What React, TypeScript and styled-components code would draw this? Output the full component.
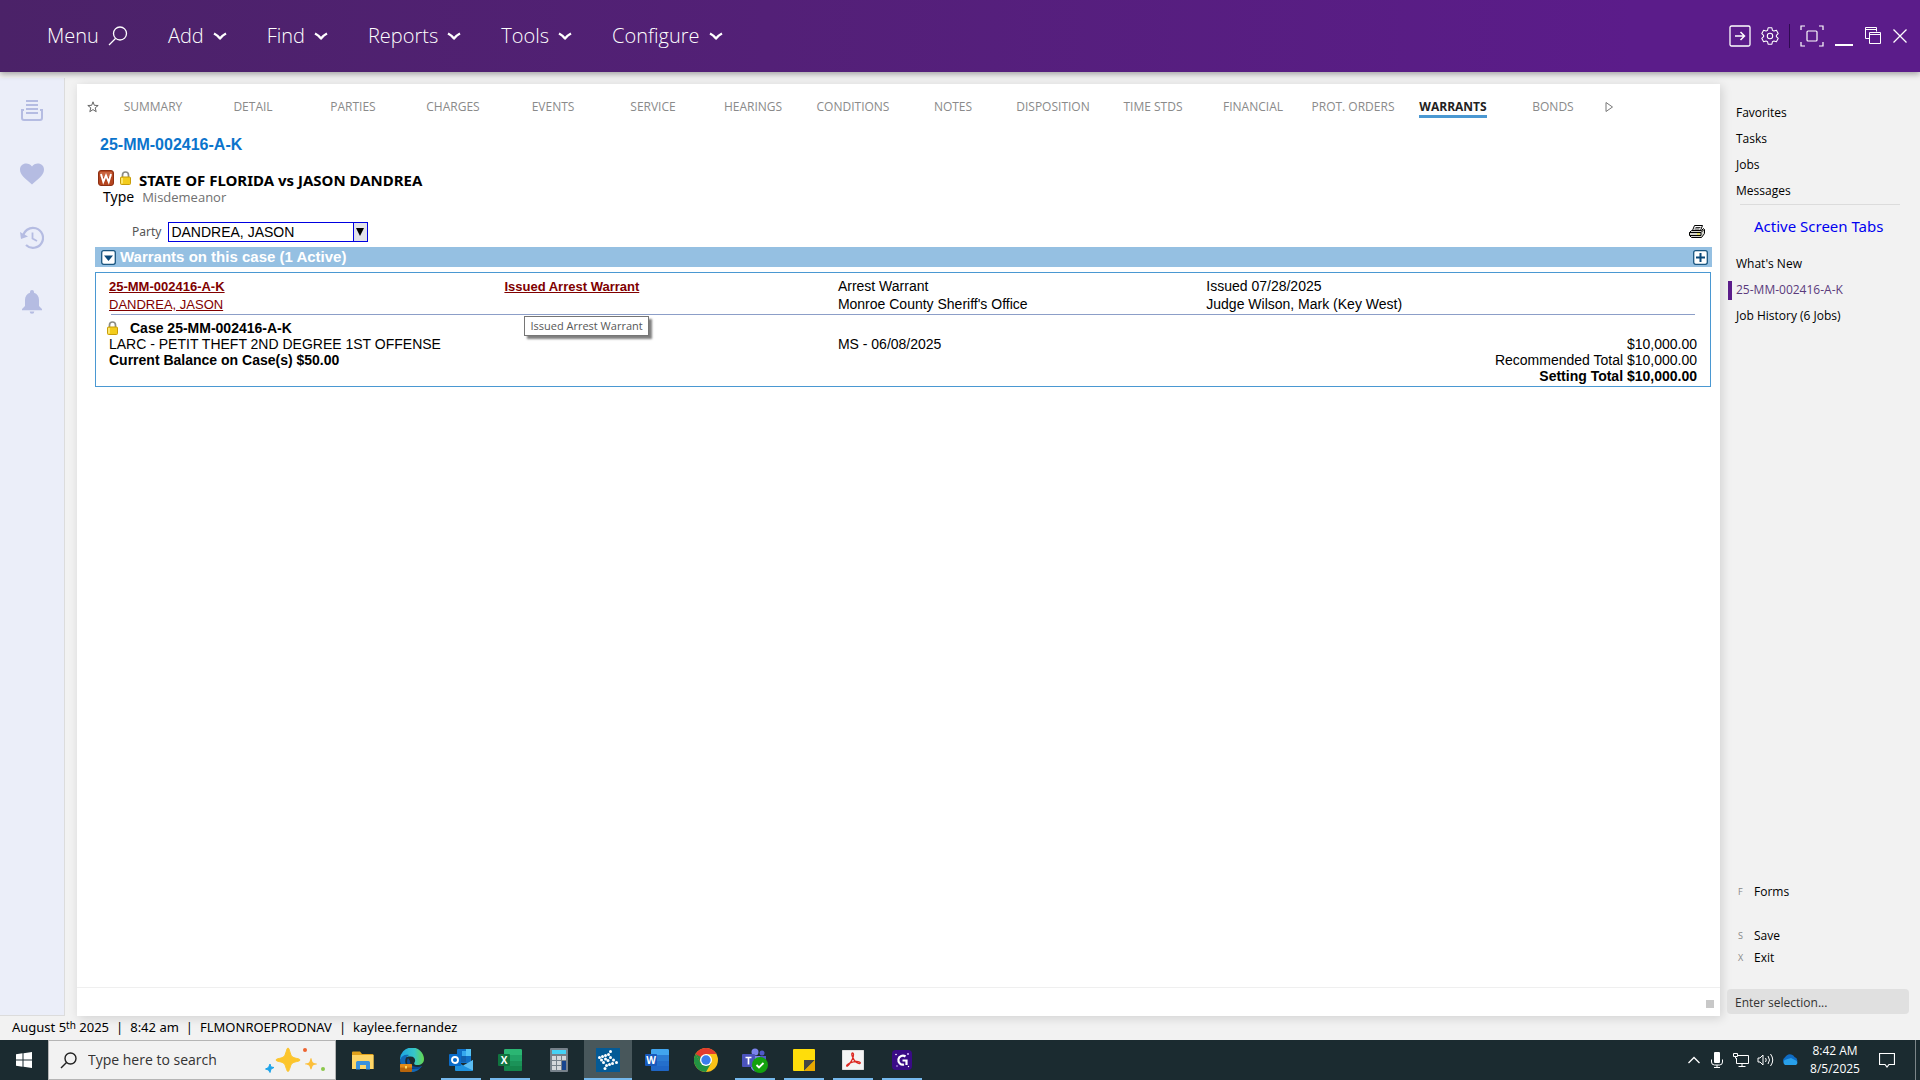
import React from "react";
import styled, { createGlobalStyle, css } from "styled-components";

const ui = `"Open Sans", "Noto Sans", sans-serif`;
const sys = `"Noto Sans", "Open Sans", sans-serif`;
const arial = `"Liberation Sans", Arial, sans-serif`;

const GlobalStyle = createGlobalStyle`
  *, *::before, *::after { box-sizing: border-box; }
  body { margin: 0; background: #f2f2f2; color: #000; font: 13px/18px ${ui}; }
  button { font: inherit; color: inherit; background: none; border: 0; padding: 0; cursor: pointer; }
  a { color: inherit; text-decoration: none; }
  svg { display: block; flex: none; }
`;

const Page = styled.div`
  display: flex;
  flex-direction: column;
  min-height: 100vh;
`;

/* ---------- header ---------- */
const Header = styled.header`
  display: flex;
  justify-content: space-between;
  height: 72px;
  padding: 0 12px 0 47px;
  color: #fff;
  background: linear-gradient(90deg, #4b2268 0%, #532077 40%, #5b1c8a 85%);
  box-shadow: 0 2px 6px rgba(0, 0, 0, 0.35);
  z-index: 1;
`;
const MenuBar = styled.nav`
  display: flex;
  align-items: center;
  gap: 40px;
`;
const MenuButton = styled.button`
  display: flex;
  align-items: center;
  gap: 9px;
  font-size: 20px;
  font-weight: 300;
  line-height: 28px;
`;
const WindowTools = styled.div`
  display: flex;
  align-items: center;
  gap: 10px;
`;
const ToolDivider = styled.span`
  width: 1px;
  height: 24px;
  background: #2f0a52;
`;

/* ---------- body ---------- */
const Body = styled.div`
  flex: 1;
  display: flex;
`;
const Rail = styled.nav`
  display: flex;
  flex-direction: column;
  align-items: center;
  gap: 40px;
  width: 65px;
  margin-top: 6px;
  padding-top: 20px;
  color: #b5bce2;
  background: #ebeef9;
  border-right: 1px solid #dcdcdc;
  border-bottom: 1px solid #dcdcdc;
`;
const Card = styled.main`
  flex: 1;
  display: flex;
  flex-direction: column;
  min-width: 0;
  margin: 12px 0 0 12px;
  background: #fff;
  box-shadow: 2px 2px 10px rgba(0, 0, 0, 0.14);
`;
const Tabs = styled.nav`
  display: flex;
  align-items: center;
  height: 46px;
  padding-left: 6px;
  color: #8a8a8a;
`;
const TabStar = styled.button`
  display: flex;
  justify-content: center;
  width: 20px;
`;
const TabSlot = styled.div`
  display: flex;
  justify-content: center;
  width: 100px;
  font-size: 12px;
  line-height: 16px;
`;
const Tab = styled.a<{ $active?: boolean }>`
  padding-top: 3px;
  border-bottom: 3px solid transparent;
  white-space: nowrap;
  ${(p) =>
    p.$active &&
    css`
      color: #222;
      font-weight: 700;
      border-color: #4a98d2;
    `}
`;
const CaseInfo = styled.section`
  display: flex;
  flex-direction: column;
  padding-left: 21px;
`;
const CaseNumber = styled.h1`
  margin: 0 0 8px 2px;
  font: 700 16px/30px ${arial};
  color: #0b74cc;
`;
const CaseTitle = styled.div`
  display: flex;
  align-items: center;
  gap: 6px;
  height: 20px;
  h2 {
    margin: 3px 0 0 2px;
    font: 700 15px/18px ${sys};
  }
`;
const CaseType = styled.div`
  display: flex;
  align-items: center;
  gap: 8px;
  padding-left: 5px;
  font: 14px/18px ${sys};
  span:last-child { color: #707070; font: 13px/18px ${ui}; }
`;
const PartyRow = styled.form`
  display: flex;
  align-items: center;
  justify-content: space-between;
  padding: 16px 15px 5px 55px;
`;
const PartyField = styled.div`
  display: flex;
  align-items: center;
  gap: 7px;
  label { color: #555; font: 12px/20px ${sys}; }
`;
const SelectBox = styled.div`
  display: flex;
  align-items: stretch;
  width: 200px;
  height: 20px;
  border: 1px solid #0000e0;
  background: linear-gradient(90deg, #fff 184px, #0000e0 184px, #0000e0 185px, #e2e2ea 185px);
  position: relative;
  select {
    flex: 1;
    appearance: none;
    border: 0;
    padding: 0 16px 0 2px;
    background: transparent;
    color: #000;
    font: 14px/18px ${arial};
    outline: 0;
  }
  svg {
    position: absolute;
    right: 3px;
    top: 5px;
    pointer-events: none;
  }
`;
const SectionBar = styled.div`
  display: flex;
  align-items: center;
  gap: 4px;
  height: 20px;
  margin: 0 8px 5px 18px;
  padding: 0 4px 0 6px;
  background: #95c0e2;
  color: #fff;
  h3 {
    flex: 1;
    margin: 0;
    font: 700 15px/20px ${arial};
  }
`;
const WarrantBox = styled.section`
  margin: 0 9px 0 18px;
  padding: 4px 13px 2px 13px;
  border: 1px solid #4a98d2;
`;
const WarrantTable = styled.table`
  width: 100%;
  table-layout: fixed;
  border-collapse: collapse;
  font: 14px/16px ${arial};
  td { padding: 0; }
`;
const Party = styled.tr`
  line-height: 18px;
`;
const Cell = styled.td<{ $end?: boolean; $bold?: boolean }>`
  position: relative;
  white-space: nowrap;
  text-align: ${(p) => (p.$end ? "right" : "left")};
  font-weight: ${(p) => (p.$bold ? 700 : 400)};
`;
const RecordLink = styled.a<{ $bold?: boolean }>`
  color: #800000;
  font-size: 13px;
  line-height: 14px;
  font-weight: ${(p) => (p.$bold ? 700 : 400)};
  text-decoration: underline;
`;
const Rule = styled.hr`
  height: 1px;
  margin: 1px 2px 4px;
  border: 0;
  background: #8c9ec8;
`;
const CaseLine = styled.div`
  display: flex;
  align-items: center;
  gap: 12px;
  height: 17px;
  margin-left: -2px;
  font-weight: 700;
`;
const Tip = styled.span`
  position: absolute;
  left: 20px;
  top: 39px;
  z-index: 2;
  padding: 0 5px;
  border: 1px solid #767676;
  background: #fff;
  box-shadow: 3px 3px 2px rgba(0, 0, 0, 0.5);
  color: #575757;
  font: 11px/18px ${ui};
`;
const CardFooter = styled.footer`
  display: flex;
  justify-content: flex-end;
  align-items: flex-start;
  height: 29px;
  margin-top: auto;
  padding: 12px 6px 0;
  border-top: 1px solid #efefef;
`;
const Grip = styled.span`
  width: 8px;
  height: 8px;
  background: #c8c8c8;
`;

/* ---------- right side ---------- */
const Side = styled.aside`
  display: flex;
  flex-direction: column;
  width: 200px;
  padding: 28px 11px 2px 7px;
  font-size: 12px;
`;
const SideLink = styled.a<{ $current?: boolean }>`
  display: flex;
  align-items: center;
  height: 26px;
  padding-left: 9px;
  line-height: 20px;
  ${(p) =>
    p.$current &&
    css`
      color: #5a3a7c;
      &::before {
        content: "";
        width: 4px;
        height: 19px;
        margin: 0 4px 0 -8px;
        background: #5b1c8a;
      }
    `}
`;
const SideRule = styled.hr`
  width: 160px;
  height: 1px;
  margin: 0 0 7px 13px;
  border: 0;
  background: #dcdcdc;
`;
const SideHeading = styled.h2`
  margin: 0 0 11px 27px;
  font: 400 15px/28px ${sys};
  color: #0000f0;
  white-space: nowrap;
`;
const Actions = styled.div`
  display: flex;
  flex-direction: column;
  margin-top: auto;
  padding-left: 11px;
`;
const ActionButton = styled.button<{ $spaced?: boolean }>`
  display: flex;
  align-items: center;
  height: 22px;
  margin-bottom: ${(p) => (p.$spaced ? 22 : 0)}px;
  font-size: 12px;
  span {
    width: 16px;
    text-align: left;
    font-size: 9px;
    color: #888;
  }
`;
const Selection = styled.input`
  height: 25px;
  margin-top: 20px;
  padding: 1px 8px 0;
  border: 0;
  border-radius: 4px;
  background: #e0e0e0;
  font: 12px/24px ${ui};
  &::placeholder { color: #333; opacity: 1; }
`;
const StatusBar = styled.div`
  display: flex;
  align-items: center;
  gap: 7px;
  height: 24px;
  padding: 0 12px 2px;
  font: 13px/20px ${sys};
  sup { font-size: 10px; line-height: 0; vertical-align: 3px; }
`;

/* ---------- taskbar ---------- */
const Taskbar = styled.footer`
  display: flex;
  height: 40px;
  background: #1b2b30;
  color: #fff;
`;
const StartButton = styled.button`
  display: grid;
  place-items: center;
  width: 48px;
`;
const SearchBox = styled.label`
  display: flex;
  align-items: center;
  width: 288px;
  padding: 0 9px 0 11px;
  border: 1px solid #b5b5b5;
  background: #f2f2f2;
  color: #222;
  input {
    flex: 1;
    min-width: 0;
    padding: 0 0 0 11px;
    border: 0;
    background: transparent;
    font: 14px/24px ${ui};
    &::placeholder { color: #333; opacity: 1; }
  }
`;
const Apps = styled.div`
  display: flex;
  gap: 1px;
  margin-left: 3px;
`;
const AppButton = styled.button<{ $open?: boolean; $active?: boolean }>`
  display: grid;
  place-items: center;
  width: 48px;
  background: ${(p) => (p.$active ? "#48575b" : "transparent")};
  ${(p) =>
    (p.$open || p.$active) &&
    css`
      background-image: linear-gradient(#76b9ed, #76b9ed);
      background-repeat: no-repeat;
      background-position: center bottom;
      background-size: ${p.$active ? 48 : 40}px 2px;
    `}
`;
const Tray = styled.div`
  display: flex;
  align-items: center;
  gap: 8px;
  margin-left: auto;
`;
const Clock = styled.time`
  width: 52px;
  margin: 0 10px 0 2px;
  text-align: center;
  white-space: nowrap;
  font: 12px/18px ${ui};
`;
const PeekLine = styled.span`
  width: 5px;
  height: 40px;
  margin-left: 12px;
  border-left: 1px solid #7c8588;
`;

/* ---------- drawings ---------- */
const Svg = ({ w, h = w, vb, children }: { w: number; h?: number; vb?: string; children: React.ReactNode }) => (
  <svg width={w} height={h} viewBox={vb ?? `0 0 ${w} ${h}`} fill="none" aria-hidden="true">
    {children}
  </svg>
);
const Chevron = () => (
  <Svg w={14} h={9}>
    <path d="M1 1.5 Q4 3 7 6.500 Q10 3 13 1.500" stroke="#fff" strokeWidth="2.4" strokeLinejoin="round" />
  </Svg>
);
const Lock = ({ size = 14 }: { size?: number }) => (
  <Svg w={11} h={size} vb="0 0 11 14">
    <path d="M2.5 7V4a3 3 0 0 1 6 0v3" stroke="#8b8b84" strokeWidth="1.7" />
    <rect x="0.5" y="6" width="10" height="7.5" rx="1" fill="#f3cc1d" stroke="#c79c0a" />
    <path d="M2 7v5.5" stroke="#fff08a" strokeWidth="1.5" />
  </Svg>
);
const Tile = ({ letter, dark, mid, light }: { letter: string; dark: string; mid: string; light: string }) => (
  <Svg w={24} h={22}>
    <rect x="6" y="0" width="18" height="22" rx="1.5" fill={mid} />
    <path d="M6 1.5A1.5 1.5 0 0 1 7.500 0H15V6H6zM15 0h7.500A1.500 1.500 0 0 1 24 1.500V6H15z" fill={light} />
    <path d="M6 12h18v5H6z" fill={dark} opacity=".35" />
    <path d="M6 17h18v3.500a1.500 1.500 0 0 1-1.500 1.500h-15A1.500 1.500 0 0 1 6 20.500z" fill={dark} opacity=".65" />
    <rect x="0" y="5" width="12" height="12" rx="1" fill={dark} />
    <text x="6" y="14.500" textAnchor="middle" fontSize="10" fontWeight="700" fontFamily="Open Sans, sans-serif" fill="#fff">{letter}</text>
  </Svg>
);
const Explorer = () => (
  <Svg w={22} h={19}>
    <path d="M0 1.500A1 1 0 0 1 1 .5h7l2 2.500h10.500a1 1 0 0 1 1 1V18H0z" fill="#e2a21b" />
    <path d="M0 4h21.500v14H0z" fill="#ffd667" />
    <path d="M4 18.500v-7a1.500 1.500 0 0 1 1.500-1.500h11a1.500 1.500 0 0 1 1.500 1.500v7h-4V14H8v4.500z" fill="#3b92dd" />
  </Svg>
);
const Edge = () => (
  <Svg w={24}>
    <defs>
      <linearGradient id="edgeTop" x1="0" y1="8" x2="24" y2="8" gradientUnits="userSpaceOnUse">
        <stop stopColor="#1ca4e4" /><stop offset=".6" stopColor="#37c6c8" /><stop offset="1" stopColor="#65d84c" />
      </linearGradient>
    </defs>
    <path d="M0 12A12 12 0 0 1 24 11c0 4-3 6-6.500 6-2.500 0-4-1-3-2.500 1.500-2 .5-6-4-6C5.500 8.500 1 11 0 12z" fill="url(#edgeTop)" />
    <path d="M0 12c1-4 5-6 9-5-4 2-5 7-2 11 3 3.500 9 4.500 15 0-3 4.500-7 6-10 6A12 12 0 0 1 0 12z" fill="#1267b4" />
    <path d="M8 10c-3 5 1 12 9 11 2 0 4-1.500 5-3-5 2-12 1-12-5z" fill="#0c4a94" />
    <rect x="0" y="16" width="12" height="8" rx="1" fill="#b8650b" />
    <path d="M0 17a1 1 0 0 1 1-1h10a1 1 0 0 1 1 1v2.500H0z" fill="#e38b18" />
    <rect x="5" y="18" width="2" height="2.500" fill="#ffd75e" />
  </Svg>
);
const Outlook = () => (
  <Svg w={24} h={22}>
    <rect x="8" y="0" width="14" height="14" rx="1" fill="#0f6fc6" />
    <path d="M13 2h9v5h-9z" fill="#35a8ee" /><path d="M17 0h5v7h-5z" fill="#55c4f6" /><path d="M8 7h9v6H8z" fill="#1160ad" />
    <path d="M6 11l9 6 9-6v10a1 1 0 0 1-1 1H7a1 1 0 0 1-1-1z" fill="#1f92df" />
    <path d="M24 11v10.500L14 16.500z" fill="#5bbdf3" />
    <rect x="0" y="5" width="12" height="12" rx="1" fill="#0a6cca" />
    <circle cx="6" cy="11" r="3" stroke="#fff" strokeWidth="1.900" />
  </Svg>
);
const Calc = () => (
  <Svg w={18} h={24}>
    <rect width="18" height="24" rx="1" fill="#76818a" />
    <rect x="2" y="2" width="14" height="4" fill="#45d2f5" />
    {[8, 13, 18].map((y) => [2, 7, 12].map((x) => <rect key={`${x}${y}`} x={x} y={y} width="4" height="4" fill="#d4d8db" />))}
    <rect x="12" y="13" width="4" height="9" fill="#17458f" />
  </Svg>
);
const dots: [number, number][] = [
  [14.5, 3.5], [12.5, 6.5], [9.5, 7.5], [6.5, 8.5], [3.5, 9.5], [5.5, 12], [7.5, 14.5], [9.5, 11],
  [12, 12.5], [14.5, 9.5], [17.5, 12], [20.5, 14.5], [16.5, 15.5], [13.5, 16.5], [10.5, 17.5], [9, 20.5],
];
const Molecule = () => (
  <Svg w={24}>
    <rect width="24" height="24" fill="#045a96" />
    {dots.map(([x, y], i) => <circle key={i} cx={x} cy={y} r="1.500" fill="#fff" />)}
  </Svg>
);
const Chrome = () => (
  <Svg w={24}>
    <circle cx="12" cy="12" r="12" fill="#fbc116" />
    <path d="M1.600 6A12 12 0 0 0 12 24l5.200-9H6.800z" fill="#229342" />
    <path d="M1.600 6A12 12 0 0 1 22.400 6H12l-5.200 9z" fill="#e33b2e" />
    <path d="M1.600 6l5.200 9H12v-3z" fill="#229342" />
    <circle cx="12" cy="12" r="6" fill="#fff" /><circle cx="12" cy="12" r="4.700" fill="#3b7ded" />
  </Svg>
);
const Teams = () => (
  <Svg w={27} h={25}>
    <circle cx="13" cy="4" r="3.500" fill="#7b83eb" /><circle cx="20" cy="5" r="2.500" fill="#5059c9" />
    <path d="M9 8h10v8a5 5 0 0 1-10 4z" fill="#7b83eb" /><path d="M18 8h6v7h-6z" fill="#5059c9" />
    <rect x="0" y="6" width="13" height="13" rx="1" fill="#4b53bc" />
    <path d="M3.500 9.500h6M6.500 9.500v7" stroke="#fff" strokeWidth="1.700" />
    <circle cx="18" cy="17" r="8" fill="#13a10e" /><path d="M14.500 17l2.500 2.500 4.500-4.500" stroke="#fff" strokeWidth="1.800" />
  </Svg>
);
const Sticky = () => (
  <Svg w={22}>
    <path d="M1 0h20a1 1 0 0 1 1 1v20a1 1 0 0 1-1 1H1a1 1 0 0 1-1-1V1a1 1 0 0 1 1-1z" fill="#ffdd0a" />
    <path d="M11 22V11h11z" fill="#444" /><path d="M22 11v10a1 1 0 0 1-1 1H11z" fill="#e9a800" />
  </Svg>
);
const Acrobat = () => (
  <Svg w={22} h={20}>
    <rect width="22" height="20" rx="1" fill="#f4f4f4" stroke="#c9c9c9" />
    <path d="M10.500 3c-2 0 .5 7 4 9.500 3 2 5 .5 3-.5-3-1.200-9-.2-12 2.500-2 2-.2 2.500 1.500.2C9 12 11.500 8 11.500 4.500c0-1-.5-1.500-1-1.500z" stroke="#dd2a24" strokeWidth="1.300" />
  </Svg>
);
const GApp = () => (
  <Svg w={20}>
    <rect width="20" height="20" rx="4" fill="#3a0b86" />
    <path d="M13.500 6.500A4.500 4.500 0 1 0 12 14.500M14.500 15V10.500H10.500" stroke="#fff" strokeWidth="2.200" />
    <circle cx="4" cy="4.500" r=".8" fill="#fff" /><circle cx="16" cy="4" r="1" fill="#d8b7ff" /><circle cx="5" cy="16" r=".8" fill="#d8b7ff" /><circle cx="16.500" cy="16.500" r=".7" fill="#fff" />
  </Svg>
);
const Sparkles = () => (
  <Svg w={62} h={26}>
    <path d="M24 1c1.500 0 2 6.500 4 8.500s8 2 8 3.500-6 1.500-8 3.500-2.500 8-4 8-2-6-4-8-8-2-8-3.500 6-1.500 8-3.500S22.500 1 24 1z" fill="#fcc52c" stroke="#fcc52c" />
    <path d="M47 11c.8 0 1 3.500 2 4.500s4 .7 4 1.500-3 .5-4 1.500-1.200 4-2 4-1-3-2-4-4-.7-4-1.500 3-.5 4-1.500S46.200 11 47 11z" fill="#fcbf3a" />
    <path d="M6 17l1 3 3 .5-3 1.500-1 3.500L4.500 23 1.500 22l3-1.500z" fill="#1ea4ea" stroke="#1ea4ea" strokeLinejoin="round" />
    <circle cx="41" cy="3" r="2" fill="#ee6430" /><circle cx="59" cy="22" r="2" fill="#8cc84b" />
  </Svg>
);

const menus = ["Add", "Find", "Reports", "Tools", "Configure"];
const tabs = ["SUMMARY", "DETAIL", "PARTIES", "CHARGES", "EVENTS", "SERVICE", "HEARINGS", "CONDITIONS", "NOTES", "DISPOSITION", "TIME STDS", "FINANCIAL", "PROT. ORDERS", "WARRANTS", "BONDS"];
const apps: { name: string; icon: React.ReactNode; open?: boolean; active?: boolean }[] = [
  { name: "File Explorer", icon: <Explorer /> },
  { name: "Edge", icon: <Edge /> },
  { name: "Outlook", icon: <Outlook />, open: true },
  { name: "Excel", icon: <Tile letter="X" dark="#10743f" mid="#21a366" light="#2bb673" />, open: true },
  { name: "Calculator", icon: <Calc /> },
  { name: "Case manager", icon: <Molecule />, active: true },
  { name: "Word", icon: <Tile letter="W" dark="#185abd" mid="#2b7cd3" light="#41a5ee" /> },
  { name: "Chrome", icon: <Chrome /> },
  { name: "Teams", icon: <Teams />, open: true },
  { name: "Sticky Notes", icon: <Sticky />, open: true },
  { name: "Acrobat", icon: <Acrobat />, open: true },
  { name: "G", icon: <GApp />, open: true },
];

export default function App() {
  return (
    <Page>
      <GlobalStyle />
      <Header>
        <MenuBar>
          <MenuButton>
            Menu
            <Svg w={20}>
              <circle cx="12" cy="7.500" r="6.500" stroke="#fff" strokeWidth="1.300" />
              <path d="M7.500 12.500L1 19" stroke="#fff" strokeWidth="1.300" />
            </Svg>
          </MenuButton>
          {menus.map((m) => (
            <MenuButton key={m}>{m}<Chevron /></MenuButton>
          ))}
        </MenuBar>
        <WindowTools>
          <button aria-label="Sign out">
            <Svg w={22}>
              <rect x="1" y="1" width="20" height="20" rx="1.500" stroke="#fff" strokeWidth="1.300" />
              <path d="M6 11h9.500M11.500 7l4 4-4 4" stroke="#fff" strokeWidth="1.500" />
            </Svg>
          </button>
          <button aria-label="Settings">
            <Svg w={18} vb="1 1 22 22">
              <path d="M9.700 2h4.600l.7 3 1.800 1 3-.9 2.200 3.900-2.200 2.100v1.800l2.200 2.100-2.200 3.900-3-.9-1.800 1-.7 3H9.700l-.7-3-1.800-1-3 .9L2 15l2.200-2.100v-1.800L2 9l2.200-3.900 3 .9 1.800-1z" stroke="#fff" strokeWidth="1.300" strokeLinejoin="round" />
              <circle cx="12" cy="12" r="3.300" stroke="#fff" strokeWidth="1.300" />
            </Svg>
          </button>
          <ToolDivider />
          <button aria-label="Full screen">
            <Svg w={24} h={22}>
              <path d="M1 5V1h4M19 1h4v4M23 17v4h-4M5 21H1v-4" stroke="#fff" strokeWidth="1.200" />
              <rect x="7" y="6" width="10" height="10" rx="1" stroke="#fff" strokeWidth="1.200" />
            </Svg>
          </button>
          <button aria-label="Minimize">
            <Svg w={20} h={22}><path d="M1 20h18" stroke="#fff" strokeWidth="2" /></Svg>
          </button>
          <button aria-label="Restore">
            <Svg w={18}>
              <path d="M12.500 4.500v-4h-11v11h4M1.500 2.500h11" stroke="#fff" />
              <path d="M5.500 5.500h11v11h-11zM5.500 7.500h11" stroke="#fff" />
            </Svg>
          </button>
          <button aria-label="Close">
            <Svg w={16}><path d="M1.500 1.500l13 13M14.500 1.500l-13 13" stroke="#fff" strokeWidth="1.300" /></Svg>
          </button>
        </WindowTools>
      </Header>

      <Body>
        <Rail>
          <a href="#inbox" aria-label="Inbox">
            <Svg w={24}>
              <path d="M6 3h12M6 7h12M6 11h12M6 15h12" stroke="currentColor" strokeWidth="2" />
              <path d="M4 12H2v8a2 2 0 0 0 2 2h16a2 2 0 0 0 2-2v-8h-2" stroke="currentColor" strokeWidth="2" />
            </Svg>
          </a>
          <a href="#favorites" aria-label="Favorites">
            <Svg w={24}><path d="M12 22.500C5 16.500 0 12.800 0 7.500 0 4 2.700 1.500 6.200 1.500c2.300 0 4.500 1.200 5.800 3 1.300-1.800 3.500-3 5.800-3C21.300 1.500 24 4 24 7.500c0 5.300-5 9-12 15z" fill="currentColor" /></Svg>
          </a>
          <a href="#history" aria-label="History">
            <Svg w={24}>
              <path d="M3 11.500A10 10 0 1 1 6 19" stroke="currentColor" strokeWidth="2.200" />
              <path d="M0 6l1 7 7-2.500z" fill="currentColor" /><path d="M12.500 6.500v6l4.500 2.500" stroke="currentColor" strokeWidth="1.800" />
            </Svg>
          </a>
          <a href="#alerts" aria-label="Alerts">
            <Svg w={24}>
              <path d="M12 0a2 2 0 0 1 2 2v.8c3.200 1 5 3.900 5 7.200v6l3 3v1.200H2V19l3-3v-6c0-3.300 1.800-6.200 5-7.200V2a2 2 0 0 1 2-2z" fill="currentColor" />
              <path d="M9.700 21.500h4.600a2.300 2.300 0 0 1-4.600 0z" fill="currentColor" />
            </Svg>
          </a>
        </Rail>

        <Card>
          <Tabs>
            <TabStar aria-label="Favorite">
              <Svg w={12}><path d="M6 .8l1.300 3.500 3.900.2-3 2.300 1 3.900L6 8.600l-3.200 2.100 1-3.900-3-2.300 3.900-.2z" stroke="#666" /></Svg>
            </TabStar>
            {tabs.map((t) => (
              <TabSlot key={t}><Tab href={`#${t}`} $active={t === "WARRANTS"}>{t}</Tab></TabSlot>
            ))}
            <button aria-label="More tabs">
              <Svg w={12}><path d="M3 1.500l6.500 4.500L3 10.500z" stroke="#777" /></Svg>
            </button>
          </Tabs>

          <CaseInfo>
            <CaseNumber>25-MM-002416-A-K</CaseNumber>
            <CaseTitle>
              <Svg w={16}>
                <rect x=".5" y=".5" width="15" height="15" rx="2.500" fill="#b5451f" stroke="#8d2f12" />
                <path d="M2 2h12v5H2z" fill="#d0704c" opacity=".7" />
                <path d="M3 4l2.300 8L8 5.500l2.700 6.500L13 4" stroke="#fff" strokeWidth="1.900" />
              </Svg>
              <Lock />
              <h2>STATE OF FLORIDA vs JASON DANDREA</h2>
            </CaseTitle>
            <CaseType><span>Type</span><span>Misdemeanor</span></CaseType>
          </CaseInfo>
          <PartyRow>
            <PartyField>
              <label htmlFor="party">Party</label>
              <SelectBox>
                <select id="party"><option>DANDREA, JASON</option></select>
                <Svg w={8}><path d="M0 0h8L4 8z" fill="#000" /></Svg>
              </SelectBox>
            </PartyField>
            <button type="button" aria-label="Print">
              <Svg w={16}>
                <path d="M5.500 1.500h8l-2 5h-8z" fill="#fff" stroke="#000" />
                <path d="M6.500 3.500h5M5.500 5h5" stroke="#000" strokeWidth=".8" />
                <path d="M.5 8.500l2-2h10l2-2 1 1v4l-3 4h-10l-2-2z" fill="#d4d4cc" stroke="#000" />
                <path d="M.5 8.500h11.500l3-3M1 11.500h11v-3" stroke="#000" /><path d="M8 10h3" stroke="#e8dc00" />
              </Svg>
            </button>
          </PartyRow>

          <SectionBar>
            <button aria-label="Collapse">
              <Svg w={15}>
                <rect x=".7" y=".7" width="13.600" height="13.600" rx="2" fill="#fff" stroke="#1a5680" strokeWidth="1.300" />
                <path d="M3 5.500h9L7.500 11z" fill="#0b4878" />
              </Svg>
            </button>
            <h3>Warrants on this case (1 Active)</h3>
            <button aria-label="Add warrant">
              <Svg w={15}>
                <rect x=".7" y=".7" width="13.600" height="13.600" rx="2" fill="#fff" stroke="#1a5680" strokeWidth="1.300" />
                <path d="M7.500 3v9M3 7.500h9" stroke="#0b4878" strokeWidth="2" />
              </Svg>
            </button>
          </SectionBar>

          <WarrantBox>
            <WarrantTable>
              <colgroup>
                <col style={{ width: "24.9%" }} />
                <col style={{ width: "21%" }} />
                <col style={{ width: "23.2%" }} />
                <col />
              </colgroup>
              <tbody>
                <Party>
                  <Cell><RecordLink href="#case" $bold>25-MM-002416-A-K</RecordLink></Cell>
                  <Cell>
                    <RecordLink href="#warrant" $bold>Issued Arrest Warrant</RecordLink>
                    <Tip role="tooltip">Issued Arrest Warrant</Tip>
                  </Cell>
                  <Cell>Arrest Warrant</Cell>
                  <Cell>Issued 07/28/2025</Cell>
                </Party>
                <Party>
                  <Cell><RecordLink href="#party">DANDREA, JASON</RecordLink></Cell>
                  <Cell />
                  <Cell>Monroe County Sheriff's Office</Cell>
                  <Cell>Judge Wilson, Mark (Key West)</Cell>
                </Party>
                <tr>
                  <Cell colSpan={4}>
                    <Rule />
                    <CaseLine><Lock />Case 25-MM-002416-A-K</CaseLine>
                  </Cell>
                </tr>
                <tr>
                  <Cell colSpan={2}>LARC - PETIT THEFT 2ND DEGREE 1ST OFFENSE</Cell>
                  <Cell>MS - 06/08/2025</Cell>
                  <Cell $end>$10,000.00</Cell>
                </tr>
                <tr>
                  <Cell colSpan={3} $bold>Current Balance on Case(s) $50.00</Cell>
                  <Cell $end>Recommended Total $10,000.00</Cell>
                </tr>
                <tr>
                  <Cell colSpan={4} $end $bold>Setting Total $10,000.00</Cell>
                </tr>
              </tbody>
            </WarrantTable>
          </WarrantBox>
          <CardFooter><Grip /></CardFooter>
        </Card>

        <Side>
          {["Favorites", "Tasks", "Jobs", "Messages"].map((s) => (
            <SideLink key={s} href={`#${s}`}>{s}</SideLink>
          ))}
          <SideRule />
          <SideHeading>Active Screen Tabs</SideHeading>
          <SideLink href="#new">What's New</SideLink>
          <SideLink href="#current" $current>25-MM-002416-A-K</SideLink>
          <SideLink href="#jobs">Job History (6 Jobs)</SideLink>
          <Actions>
            <ActionButton $spaced><span>F</span>Forms</ActionButton>
            <ActionButton><span>S</span>Save</ActionButton>
            <ActionButton><span>X</span>Exit</ActionButton>
          </Actions>
          <Selection aria-label="Selection" placeholder="Enter selection..." />
        </Side>
      </Body>

      <StatusBar>
        <span>August 5<sup>th</sup> 2025</span><span>|</span>
        <span>8:42 am</span><span>|</span>
        <span>FLMONROEPRODNAV</span><span>|</span>
        <span>kaylee.fernandez</span>
      </StatusBar>

      <Taskbar>
        <StartButton aria-label="Start">
          <Svg w={16}><path d="M0 2.300L6.500 1.300v6.200H0zM7.500 1.200L16 0v7.500H7.500zM0 8.500h6.500v6.200L0 13.700zM7.500 8.500H16V16l-8.500-1.200z" fill="#fff" /></Svg>
        </StartButton>
        <SearchBox>
          <Svg w={17}><circle cx="10.500" cy="6.500" r="5.500" stroke="#222" strokeWidth="1.400" /><path d="M6.500 10.500L1 16" stroke="#222" strokeWidth="1.400" /></Svg>
          <input type="text" aria-label="Search" placeholder="Type here to search" />
          <Sparkles />
        </SearchBox>
        <Apps>
          {apps.map((a) => (
            <AppButton key={a.name} aria-label={a.name} $open={a.open} $active={a.active}>{a.icon}</AppButton>
          ))}
        </Apps>
        <Tray>
          <Svg w={14} h={16}><path d="M1.500 11L7 5.500l5.500 5.500" stroke="#fff" strokeWidth="1.300" /></Svg>
          <Svg w={16}>
            <rect x="5" y="0" width="6" height="11" rx="1" fill="#fff" />
            <path d="M2.500 7.500v2.500a3 3 0 0 0 3 3h5a3 3 0 0 0 3-3V7.500M8 13v2.500M5 15.500h6" stroke="#fff" />
          </Svg>
          <Svg w={16}>
            <path d="M5 3.500h10.500v8H3.500V6M9 11.500v3M5.500 14.500h7" stroke="#fff" />
            <path d="M.5 1.500h4v3h-4zM2.500 4.500v2" stroke="#fff" />
          </Svg>
          <Svg w={17} h={16}>
            <path d="M1 6h2l3-3v10l-3-3H1z" stroke="#fff" />
            <path d="M8.500 6q1.500 2 0 4M11 4q3 4 0 8M13.500 2q4.500 6 0 12" stroke="#fff" />
          </Svg>
          <Svg w={17} h={12}>
            <path d="M4 10.500A4 4 0 0 1 3 3.200 5.500 5.500 0 0 1 12.500 3 4 4 0 0 1 13 10.500z" fill="#0f6cc4" />
            <path d="M3 11a3 3 0 0 1 1-5.500L9 4l5 2.500A2.500 2.500 0 0 1 14 11z" fill="#28a0ea" />
          </Svg>
          <Clock>8:42 AM<br />8/5/2025</Clock>
          <Svg w={16}><path d="M.5 1.500h15v11H10L8 15l-2-2.500H.5z" stroke="#fff" strokeWidth="1.200" /></Svg>
          <PeekLine />
        </Tray>
      </Taskbar>
    </Page>
  );
}
